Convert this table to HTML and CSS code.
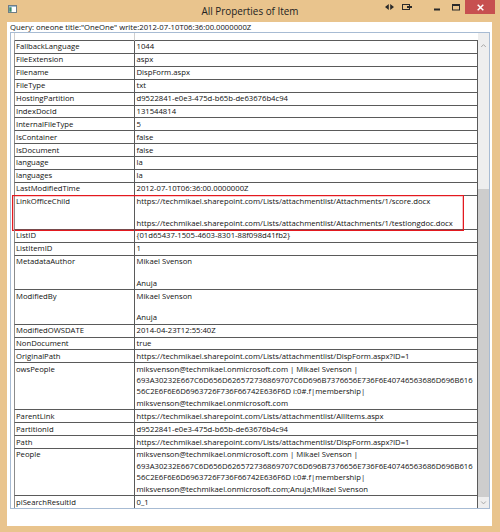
FILE: index.html
```html
<!DOCTYPE html>
<html lang="en">
<head>
<meta charset="utf-8">
<title>All Properties of Item</title>
<link rel="stylesheet" href="styles.css">
</head>
<body>
<div class="window">
  <div class="titlebar">
    <div class="tb-left">
      <svg class="app-icon" width="9" height="8" viewBox="0 0 9 8">
        <rect x="0.5" y="0.5" width="8" height="7" fill="#fff" stroke="#6f7d86"/>
        <rect x="1" y="1" width="7" height="1" fill="#9cbad3"/>
        <rect x="1.2" y="2.2" width="2.4" height="4.6" fill="#3c8a6c"/>
      </svg>
    </div>
    <div class="title">All Properties of Item</div>
    <div class="controls">
      <div class="ctl ctl-a">
        <svg width="9" height="6" viewBox="0 0 9 6"><path d="M0 3 L3.8 0 V6 Z M5.2 0 L9 3 L5.2 6 Z" fill="#2a2a2a"/></svg>
      </div>
      <div class="ctl ctl-b">
        <svg width="10" height="6" viewBox="0 0 10 6"><rect x="0.5" y="0.5" width="7" height="5" fill="none" stroke="#2a2a2a"/><rect x="5" y="2" width="5" height="2" fill="#2a2a2a"/></svg>
      </div>
      <div class="ctl ctl-min">
        <svg width="6" height="14" viewBox="0 0 6 14"><rect x="0" y="8.5" width="6" height="2" fill="#2a2a2a"/></svg>
      </div>
      <div class="ctl ctl-max">
        <svg width="8" height="14" viewBox="0 0 8 14"><rect x="0.5" y="4.5" width="7" height="5.5" fill="none" stroke="#2a2a2a"/><rect x="0" y="4" width="8" height="2" fill="#2a2a2a"/></svg>
      </div>
      <div class="ctl ctl-close">
        <svg width="7" height="7" viewBox="0 0 7 7"><path d="M0.7 0.7 L6.3 6.3 M6.3 0.7 L0.7 6.3" stroke="#fff" stroke-width="1.5"/></svg>
      </div>
    </div>
  </div>

  <div class="client">
    <div class="query">Query: oneone title:"OneOne" write:2012-07-10T06:36:00.0000000Z</div>
    <div class="grid">
      <div class="rows">
        <div class="hdr"><div class="h1"></div><div class="h2"></div></div>

        <div class="row"><div class="c1">FallbackLanguage</div><div class="c2">1044</div></div>
        <div class="row"><div class="c1">FileExtension</div><div class="c2">aspx</div></div>
        <div class="row"><div class="c1">Filename</div><div class="c2">DispForm.aspx</div></div>
        <div class="row"><div class="c1">FileType</div><div class="c2">txt</div></div>
        <div class="row"><div class="c1">HostingPartition</div><div class="c2">d9522841-e0e3-475d-b65b-de63676b4c94</div></div>
        <div class="row"><div class="c1">IndexDocId</div><div class="c2">131544814</div></div>
        <div class="row"><div class="c1">InternalFileType</div><div class="c2">5</div></div>
        <div class="row"><div class="c1">IsContainer</div><div class="c2">false</div></div>
        <div class="row"><div class="c1">IsDocument</div><div class="c2">false</div></div>
        <div class="row"><div class="c1">language</div><div class="c2">la</div></div>
        <div class="row"><div class="c1">languages</div><div class="c2">la</div></div>
        <div class="row"><div class="c1">LastModifiedTime</div><div class="c2">2012-07-10T06:36:00.0000000Z</div></div>
        <div class="row row-mark">
          <div class="c1">LinkOfficeChild</div>
          <div class="c2">
            <div>https://techmikael.sharepoint.com/Lists/attachmentlist/Attachments/1/score.docx</div>
            <div class="gap"></div>
            <div>https://techmikael.sharepoint.com/Lists/attachmentlist/Attachments/1/testlongdoc.docx</div>
          </div>
          <div class="mark"></div>
        </div>
        <div class="row"><div class="c1">ListID</div><div class="c2">{01d65437-1505-4603-8301-88f098d41fb2}</div></div>
        <div class="row"><div class="c1">ListItemID</div><div class="c2">1</div></div>
        <div class="row">
          <div class="c1">MetadataAuthor</div>
          <div class="c2"><div>Mikael Svenson</div><div class="gap"></div><div>Anuja</div></div>
        </div>
        <div class="row">
          <div class="c1">ModifiedBy</div>
          <div class="c2"><div>Mikael Svenson</div><div class="gap"></div><div>Anuja</div></div>
        </div>
        <div class="row"><div class="c1">ModifiedOWSDATE</div><div class="c2">2014-04-23T12:55:40Z</div></div>
        <div class="row"><div class="c1">NonDocument</div><div class="c2">true</div></div>
        <div class="row"><div class="c1">OriginalPath</div><div class="c2">https://techmikael.sharepoint.com/Lists/attachmentlist/DispForm.aspx?ID=1</div></div>
        <div class="row">
          <div class="c1">owsPeople</div>
          <div class="c2">
            <div>miksvenson@techmikael.onmicrosoft.com | Mikael Svenson |</div>
            <div>693A30232E667C6D656D626572736869707C6D696B7376656E736F6E40746563686D696B616</div>
            <div>56C2E6F6E6D6963726F736F66742E636F6D i:0#.f|membership|</div>
            <div>miksvenson@techmikael.onmicrosoft.com</div>
          </div>
        </div>
        <div class="row"><div class="c1">ParentLink</div><div class="c2">https://techmikael.sharepoint.com/Lists/attachmentlist/AllItems.aspx</div></div>
        <div class="row"><div class="c1">PartitionId</div><div class="c2">d9522841-e0e3-475d-b65b-de63676b4c94</div></div>
        <div class="row"><div class="c1">Path</div><div class="c2">https://techmikael.sharepoint.com/Lists/attachmentlist/DispForm.aspx?ID=1</div></div>
        <div class="row">
          <div class="c1">People</div>
          <div class="c2">
            <div>miksvenson@techmikael.onmicrosoft.com | Mikael Svenson |</div>
            <div>693A30232E667C6D656D626572736869707C6D696B7376656E736F6E40746563686D696B616</div>
            <div>56C2E6F6E6D6963726F736F66742E636F6D i:0#.f|membership|</div>
            <div>miksvenson@techmikael.onmicrosoft.com;Anuja;Mikael Svenson</div>
          </div>
        </div>
        <div class="row"><div class="c1">piSearchResultId</div><div class="c2">0_1</div></div>
      </div>
      <div class="scrollbar">
        <div class="sb-up">
          <svg width="11" height="20" viewBox="0 0 11 20"><path d="M3.2 14 L5.5 11.6 L7.8 14" fill="none" stroke="#a9a9a9" stroke-width="1"/></svg>
        </div>
        <div class="sb-track"><div class="sb-thumb"></div></div>
        <div class="sb-down">
          <svg width="11" height="11" viewBox="0 0 11 11"><path d="M3.2 4.5 L5.5 6.9 L7.8 4.5" fill="none" stroke="#a9a9a9" stroke-width="1"/></svg>
        </div>
      </div>
    </div>
  </div>
</div>
</body>
</html>
```

FILE: styles.css
```css
* {
  box-sizing: border-box;
}

html,
body {
  margin: 0;
  padding: 0;
}

body {
  width: 500px;
  height: 532px;
  overflow: hidden;
  background: #e9c48d;
  font-family: "Open Sans", "Liberation Sans", sans-serif;
  color: #111111;
}

.window {
  height: 532px;
  display: flex;
  flex-direction: column;
}

/* ---------- title bar ---------- */
.titlebar {
  height: 22px;
  flex: none;
  display: grid;
  grid-template-columns: 1fr auto 1fr;
}

.tb-left {
  padding: 5px 0 0 8px;
}

.app-icon {
  display: block;
}

.title {
  font-size: 9.9px;
  line-height: 22px;
  color: #222222;
  white-space: nowrap;
}

.controls {
  display: flex;
  justify-content: flex-end;
  align-items: flex-start;
  padding-right: 5px;
}

.ctl {
  height: 14px;
  display: flex;
  align-items: center;
  justify-content: center;
}

.ctl svg {
  display: block;
}

.ctl-a {
  width: 18px;
}

.ctl-b {
  width: 18px;
  margin-right: 12px;
}

.ctl-min {
  width: 18px;
}

.ctl-max {
  width: 19px;
}

.ctl-close {
  width: 30px;
  background: #c75050;
}

/* ---------- client area ---------- */
.client {
  flex: 1;
  margin: 0 8px 6px 7px;
  background: #fff;
  padding: 0 2px 0 3px;
  display: flex;
  flex-direction: column;
}

.query {
  height: 10px;
  line-height: 10px;
  font-size: 7.7px;
  white-space: nowrap;
}

.grid {
  height: 477px;
  flex: none;
  border: 1px solid #a7bbd3;
  display: flex;
}

.rows {
  width: 467px;
  flex: none;
  overflow: hidden;
  font-size: 7.7px;
  line-height: 11.4px;
}

.hdr {
  display: flex;
  height: 8px;
  padding-left: 3px;
}

.h1 {
  width: 121px;
  flex: none;
  border-left: 1px solid #d0d0d0;
  border-right: 1px solid #d0d0d0;
  border-bottom: 1px solid #5a5a5a;
}

.h2 {
  width: 343px;
  flex: none;
  border-bottom: 1px solid #5a5a5a;
}

.row {
  display: flex;
  padding-left: 3px;
  position: relative;
}

.c1,
.c2 {
  border-bottom: 1px solid #5a5a5a;
  padding-top: 0.25px;
  padding-bottom: 0.25px;
  white-space: nowrap;
  overflow: hidden;
}

.c1 {
  width: 121px;
  flex: none;
  border-left: 1px solid #8c8c8c;
  border-right: 1px solid #5a5a5a;
  padding-left: 1px;
}

.c2 {
  width: 343px;
  flex: none;
  border-right: 1px solid #5a5a5a;
  padding-left: 1.5px;
}

.gap {
  height: 10px;
}

.mark {
  position: absolute;
  left: 1px;
  top: -1px;
  width: 452px;
  height: 36px;
  border: 1px solid #e3191f;
  box-shadow: inset 0 0 0 0.6px rgba(227, 25, 31, 0.45);
  pointer-events: none;
}

/* ---------- scrollbar ---------- */
.scrollbar {
  width: 11px;
  flex: none;
  background: #eeeeee;
  display: flex;
  flex-direction: column;
}

.scrollbar svg {
  display: block;
}

.sb-up {
  height: 20px;
  flex: none;
}

.sb-track {
  flex: 1;
  display: flex;
  flex-direction: column;
  justify-content: flex-end;
}

.sb-thumb {
  height: 308px;
  background: #cdcdcd;
}

.sb-down {
  height: 11px;
  flex: none;
}
```
